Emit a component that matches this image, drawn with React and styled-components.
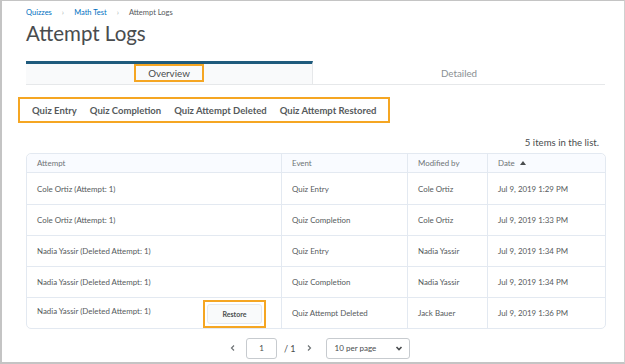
import React from "react";
import styled, { createGlobalStyle } from "styled-components";

const Global = createGlobalStyle`
  html, body { margin: 0; padding: 0; background: #fff; }
  body { font-family: Lato, "Open Sans", "Liberation Sans", sans-serif; color: #494c4e; }
  * { box-sizing: border-box; }
`;

const Frame = styled.div`
  width: 625px;
  height: 364px;
  border-top: 1px solid #c4c4c4;
  border-left: 2px solid #c4c4c4;
  border-right: 1px solid #d0d0d0;
  border-bottom: 2px solid #c4c4c4;
  padding: 5px 19px 0 24px;
  overflow: hidden;
`;

const Crumbs = styled.nav`
  display: flex;
  align-items: center;
  gap: 10px;
  height: 12px;
  font-size: 7.5px;
`;

const Crumb = styled.span`
  color: ${(p) => (p.$link ? "#006fbf" : "#565a5c")};
`;

const Sep = styled.span`
  color: #b0b4b7;
  font-size: 8px;
`;

const Title = styled.h1`
  margin: 2px 0 0;
  font-size: 20.5px;
  line-height: 26px;
  font-weight: 400;
  color: #494c4e;
`;

const Tabs = styled.div`
  display: flex;
  margin-top: 15px;
  height: 24px;
`;

const Tab = styled.div`
  flex: ${(p) => p.$w};
  display: flex;
  align-items: center;
  justify-content: center;
  font-size: 9.8px;
  color: ${(p) => (p.$active ? "#494c4e" : "#8a8f93")};
  background: ${(p) => (p.$active ? "#f9fafb" : "#fff")};
  border-top: ${(p) => (p.$active ? "3px solid #1f5b7d" : "none")};
  border-bottom: 1px solid #e6e8ea;
  border-right: ${(p) => (p.$active ? "1px solid #e6e8ea" : "none")};
`;

const Highlight = styled.span`
  display: inline-flex;
  align-items: center;
  border: 2px solid #f5a623;
`;

const OverviewMark = styled(Highlight)`
  align-self: flex-start;
  padding: 0 12px;
  height: 18px;
`;

const FilterBox = styled(Highlight)`
  margin: 12px 0 0 -8px;
  height: 26px;
  padding: 0 12px 0 12px;
  gap: 13px;
`;

const Filter = styled.span`
  font-size: 9.5px;
  font-weight: 700;
  color: #565a5c;
`;

const Count = styled.div`
  margin-top: 14px;
  text-align: right;
  padding-right: 6px;
  font-size: 9.6px;
  color: #494c4e;
  height: 12px;
`;

const Table = styled.table`
  margin-top: 4px;
  width: 578px;
  border-collapse: separate;
  border-spacing: 0;
  border: 1px solid #e3e9f1;
  border-radius: 5px;
  table-layout: fixed;
  font-size: 7.9px;
`;

const Th = styled.th`
  height: 19px;
  text-align: left;
  font-weight: 400;
  padding: 0 10px;
  color: #6e7376;
  background: #f9fbff;
  border-bottom: 1px solid #e3e9f1;
  border-left: ${(p) => (p.$first ? "none" : "1px solid #e3e9f1")};
  &:first-child { border-top-left-radius: 5px; }
  &:last-child { border-top-right-radius: 5px; }
`;

const Td = styled.td`
  height: 31px;
  padding: 0 10px;
  color: #565a5c;
  vertical-align: middle;
  border-top: ${(p) => (p.$firstRow ? "none" : "1px solid #e3e9f1")};
  border-left: ${(p) => (p.$first ? "none" : "1px solid #e3e9f1")};
  white-space: nowrap;
`;

const AttemptCell = styled.div`
  display: flex;
  align-items: center;
  justify-content: space-between;
  padding-right: 5px;
`;

const AttemptText = styled.span`
  margin-bottom: 5px;
`;

const RestoreMark = styled(Highlight)`
  padding: 2px;
  margin: -2px 0 -3px;
`;

const Button = styled.button`
  width: 55px;
  height: 20px;
  border: 1px solid #e3e9f1;
  border-radius: 3px;
  background: #f9fafb;
  font-family: inherit;
  font-size: 7px;
  font-weight: 700;
  color: #494c4e;
  padding: 0;
`;

const SortArrow = styled.span`
  display: inline-block;
  margin-left: 5px;
  width: 0;
  height: 0;
  border-left: 3px solid transparent;
  border-right: 3px solid transparent;
  border-bottom: 4px solid #494c4e;
  vertical-align: 1px;
`;

const Pager = styled.div`
  display: flex;
  align-items: center;
  margin-top: 8px;
  padding-left: 203px;
  height: 22px;
  font-size: 9px;
  color: #494c4e;
`;

const Chevron = styled.span`
  display: inline-flex;
  color: #6e7376;
  margin: ${(p) => p.$m};
`;

const Of = styled.span`
  margin-left: 7px;
`;

const PageInput = styled.div`
  width: 31px;
  height: 21px;
  border: 1px solid #c7cbcf;
  border-radius: 3px;
  display: flex;
  align-items: center;
  justify-content: center;
  font-size: 8px;
`;

const Select = styled.div`
  width: 84px;
  height: 21px;
  border: 1px solid #c7cbcf;
  border-radius: 3px;
  display: flex;
  align-items: center;
  justify-content: space-between;
  padding: 0 6px 0 8px;
  font-size: 8px;
  margin-left: 13px;
`;

const Chev = ({ dir }) => (
  <svg width="8" height="8" viewBox="0 0 8 8" fill="none" stroke="#6e7376" strokeWidth="1.2">
    {dir === "left" ? (
      <path d="M5 1.5 2.5 4 5 6.5" />
    ) : dir === "right" ? (
      <path d="M3 1.5 5.5 4 3 6.5" />
    ) : (
      <path d="M1.5 3 4 5.5 6.5 3" strokeWidth="1.6" stroke="#494c4e" />
    )}
  </svg>
);

const rows = [
  ["Cole Ortiz (Attempt: 1)", "Quiz Entry", "Cole Ortiz", "Jul 9, 2019 1:29 PM"],
  ["Cole Ortiz (Attempt: 1)", "Quiz Completion", "Cole Ortiz", "Jul 9, 2019 1:33 PM"],
  ["Nadia Yassir (Deleted Attempt: 1)", "Quiz Entry", "Nadia Yassir", "Jul 9, 2019 1:34 PM"],
  ["Nadia Yassir (Deleted Attempt: 1)", "Quiz Completion", "Nadia Yassir", "Jul 9, 2019 1:34 PM"],
  ["Nadia Yassir (Deleted Attempt: 1)", "Quiz Attempt Deleted", "Jack Bauer", "Jul 9, 2019 1:36 PM", true],
];

export default function App() {
  return (
    <>
      <Global />
      <Frame>
        <Crumbs>
          <Crumb $link>Quizzes</Crumb>
          <Sep>›</Sep>
          <Crumb $link>Math Test</Crumb>
          <Sep>›</Sep>
          <Crumb>Attempt Logs</Crumb>
        </Crumbs>
        <Title>Attempt Logs</Title>
        <Tabs>
          <Tab $active $w="0 0 287px">
            <OverviewMark>Overview</OverviewMark>
          </Tab>
          <Tab $w="1">Detailed</Tab>
        </Tabs>
        <FilterBox>
          <Filter>Quiz Entry</Filter>
          <Filter>Quiz Completion</Filter>
          <Filter>Quiz Attempt Deleted</Filter>
          <Filter>Quiz Attempt Restored</Filter>
        </FilterBox>
        <Count>5 items in the list.</Count>
        <Table>
          <colgroup>
            <col style={{ width: 254 }} />
            <col style={{ width: 126 }} />
            <col style={{ width: 80 }} />
            <col style={{ width: 118 }} />
          </colgroup>
          <thead>
            <tr>
              <Th $first>Attempt</Th>
              <Th>Event</Th>
              <Th>Modified by</Th>
              <Th>
                Date<SortArrow />
              </Th>
            </tr>
          </thead>
          <tbody>
            {rows.map((r, i) => (
              <tr key={i}>
                <Td $first $firstRow={i === 0}>
                  {r[4] ? (
                    <AttemptCell>
                      <AttemptText>{r[0]}</AttemptText>
                      <RestoreMark>
                        <Button>Restore</Button>
                      </RestoreMark>
                    </AttemptCell>
                  ) : (
                    r[0]
                  )}
                </Td>
                <Td $firstRow={i === 0}>{r[1]}</Td>
                <Td $firstRow={i === 0}>{r[2]}</Td>
                <Td $firstRow={i === 0}>{r[3]}</Td>
              </tr>
            ))}
          </tbody>
        </Table>
        <Pager>
          <Chevron $m="0 9px 0 0">
            <Chev dir="left" />
          </Chevron>
          <PageInput>1</PageInput>
          <Of>/ 1</Of>
          <Chevron $m="0 0 0 9px">
            <Chev dir="right" />
          </Chevron>
          <Select>
            <span>10 per page</span>
            <Chev dir="down" />
          </Select>
        </Pager>
      </Frame>
    </>
  );
}
